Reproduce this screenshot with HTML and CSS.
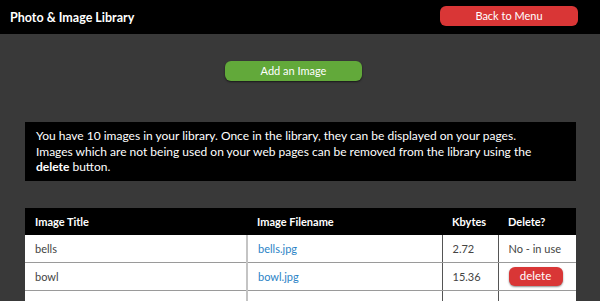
FILE: index.html
```html
<!DOCTYPE html>
<html lang="en">
<head>
  <meta charset="UTF-8" />
  <title>Photo &amp; Image Library</title>
  <link rel="stylesheet" href="styles.css">
</head>
<body>
  <div class="topbar">
    <h1 class="title">Photo &amp; Image Library</h1>
    <a class="btn btn-red back" href="#">Back to Menu</a>
  </div>

  <div class="content">
    <div class="actions">
      <a class="btn btn-green add" href="#">Add an Image</a>
    </div>

    <div class="info">
      You have 10 images in your library. Once in the library, they can be displayed on your pages.<br>
      Images which are not being used on your web pages can be removed from the library using the<br>
      <b>delete</b> button.
    </div>

    <table class="images">
      <colgroup>
        <col class="col-title">
        <col class="col-file">
        <col class="col-size">
        <col class="col-del">
      </colgroup>
      <thead>
        <tr>
          <th>Image Title</th>
          <th>Image Filename</th>
          <th>Kbytes</th>
          <th>Delete?</th>
        </tr>
      </thead>
      <tbody>
        <tr>
          <td>bells</td>
          <td class="file"><a href="#">bells.jpg</a></td>
          <td>2.72</td>
          <td>No - in use</td>
        </tr>
        <tr>
          <td>bowl</td>
          <td class="file"><a href="#">bowl.jpg</a></td>
          <td>15.36</td>
          <td><a class="btn btn-red del" href="#">delete</a></td>
        </tr>
        <!-- next row starts just at the fold -->
        <tr>
          <td></td>
          <td class="file"></td>
          <td></td>
          <td></td>
        </tr>
      </tbody>
    </table>
  </div>
</body>
</html>
```

FILE: styles.css
```css
/* Global */
body {
  margin: 0;
  font-family: Lato, "Open Sans", sans-serif;
  background: #393939;
  color: #fff;
  overflow: hidden;
}
a {
  text-decoration: none;
}
/* Top bar */
.topbar {
  height: 34px;
  background: #000;
  display: flex;
  align-items: center;
  justify-content: space-between;
  padding: 0 22px 0 10px;
}
.title {
  margin: 0;
  font-size: 12.5px;
  font-weight: 700;
}
/* Buttons */
.btn {
  display: inline-block;
  color: #fff;
  text-align: center;
  border-radius: 6px;
}
.btn-red {
  background: #d93636;
}
.btn-green {
  background: #62a93a;
}
.back {
  width: 138px;
  height: 20px;
  line-height: 20px;
  font-size: 11px;
  margin-top: -2px;
}
/* Content */
.content {
  padding: 27px 24px 0 25px;
}
.actions {
  display: flex;
  justify-content: center;
  padding-right: 14px;
}
.add {
  width: 137px;
  height: 20px;
  line-height: 20px;
  font-size: 11px;
  box-shadow: 0 1px 2px rgba(0, 0, 0, 0.6);
}
.info {
  margin-top: 41px;
  background: #000;
  font-size: 12px;
  line-height: 15.5px;
  padding: 6px 11px 6px;
}
/* Table */
.images {
  margin-top: 27px;
  width: 100%;
  table-layout: fixed;
  border-collapse: collapse;
  font-size: 11px;
}
.col-title {
  width: 222px;
}
.col-file {
  width: 195px;
}
.col-size {
  width: 56px;
}
.images th {
  background: #000;
  color: #fff;
  text-align: left;
  font-weight: 700;
  height: 27px;
  padding: 0 10px;
}
.images td {
  background: #fff;
  color: #444;
  height: 27px;
  padding: 0 10px;
  border-bottom: 1px solid #9a9a9a;
  white-space: nowrap;
}
.images td + td {
  border-left: 1px solid #555;
}
.images td.file {
  border-left: 2px solid #c4c4c4;
}
.images td a {
  color: #2b83c6;
}
.images .del {
  color: #fff;
  width: 54px;
  height: 19px;
  line-height: 18px;
  font-size: 11.5px;
  border-radius: 6px;
  box-shadow: 0 1px 2px rgba(0, 0, 0, 0.45);
}
```
